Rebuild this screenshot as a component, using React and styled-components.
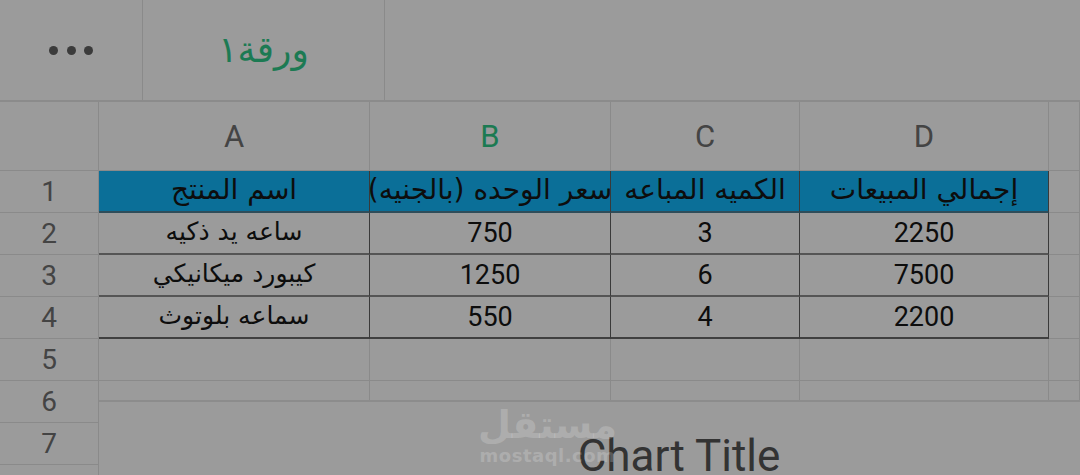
import React from "react";
import styled, { createGlobalStyle } from "styled-components";

const GlobalStyle = createGlobalStyle`
  html, body {
    margin: 0;
    padding: 0;
    background: #9b9b9b;
  }
  body {
    overflow: hidden;
  }
  *, *::before, *::after {
    box-sizing: border-box;
  }
`;

const ARABIC = `"DejaVu Sans", "Noto Sans", sans-serif`;
const LINE = "#8a8a8a";
const DARK = "#3a3a3a";

const Page = styled.div`
  position: relative;
  width: 1080px;
  height: 475px;
  overflow: hidden;
  background: #9b9b9b;
  font-family: Roboto, "Liberation Sans", sans-serif;
`;

/* ---------- sheet tabs bar ---------- */

const TopBar = styled.div`
  display: flex;
  height: 102px;
  border-bottom: 2px solid #8b8b8b;
`;

const MenuButton = styled.div`
  width: 143px;
  border-right: 1px solid ${LINE};
  display: flex;
  align-items: center;
  justify-content: center;
  gap: 8.5px;
`;

const Dot = styled.span`
  width: 9px;
  height: 9px;
  border-radius: 50%;
  background: #3b3b3b;
`;

const SheetTab = styled.div`
  width: 242px;
  border-right: 1px solid ${LINE};
  display: flex;
  align-items: center;
  justify-content: center;
  padding-bottom: 2px;
  color: #1c7a53;
  font-family: ${ARABIC};
  font-size: 36px;
`;

/* ---------- grid ---------- */

const Grid = styled.div`
  display: grid;
  grid-template-columns: 99px 271px 241px 189px 249px 1fr;
  grid-template-rows: 69px repeat(8, 42px);
`;

const Corner = styled.div`
  border-right: 1px solid ${LINE};
  border-bottom: 1px solid ${LINE};
`;

const ColHead = styled.div`
  display: flex;
  align-items: center;
  justify-content: center;
  border-right: 1px solid ${LINE};
  border-bottom: 1px solid ${LINE};
  font-size: 31px;
  font-weight: 400;
  color: ${(p) => (p.$active ? "#1b7a52" : "#444444")};
`;

const RowHead = styled.div`
  display: flex;
  align-items: center;
  justify-content: center;
  border-right: 1px solid ${LINE};
  border-bottom: 1px solid ${LINE};
  font-size: 28px;
  color: #444444;
`;

const Cell = styled.div`
  display: flex;
  align-items: center;
  justify-content: center;
  overflow: hidden;
  white-space: nowrap;
  border-right: 1px solid ${(p) => (p.$table ? DARK : LINE)};
  border-bottom: 2px solid ${(p) => (p.$last ? "#404040" : p.$head ? "#2f4d5a" : "#555555")};
  background: ${(p) => (p.$head ? "#0b6f98" : "transparent")};
  color: #0d0d0d;
  font-family: ${(p) => (p.$rtl ? ARABIC : `Roboto, "Liberation Sans", sans-serif`)};
  font-size: ${(p) => (p.$head ? "28px" : p.$rtl ? "25px" : "27px")};
  direction: ${(p) => (p.$rtl ? "rtl" : "ltr")};
  padding-bottom: ${(p) => (p.$rtl ? "4px" : "0")};
`;

const Text = styled.span`
  flex: none;
`;

const BlankCell = styled.div`
  border-right: 1px solid ${LINE};
  border-bottom: 1px solid ${LINE};
`;

/* ---------- chart object ---------- */

const ChartPanel = styled.div`
  position: absolute;
  top: 400px;
  left: 99px;
  width: 1160px;
  height: 200px;
  background: #9b9b9b;
  border-top: 2px solid #8c8c8c;
  display: flex;
  justify-content: center;
  padding-top: 32px;
`;

const ChartTitle = styled.div`
  font-family: Roboto, "Liberation Sans", sans-serif;
  font-size: 44px;
  line-height: 44px;
  color: #333333;
`;

const Watermark = styled.div`
  position: absolute;
  left: 478px;
  top: 404px;
  display: flex;
  flex-direction: column;
  align-items: center;
  color: rgba(255, 255, 255, 0.2);
  pointer-events: none;
`;

const WatermarkLogo = styled.span`
  font-family: ${ARABIC};
  font-weight: 700;
  font-size: 38px;
  line-height: 42px;
`;

const WatermarkSite = styled.span`
  font-family: "DejaVu Sans", sans-serif;
  font-weight: 700;
  font-size: 18px;
  line-height: 20px;
  letter-spacing: 0.5px;
`;

const columns = [
  { key: "A" },
  { key: "B", active: true },
  { key: "C" },
  { key: "D" },
];

const headers = ["اسم المنتج", "سعر الوحده (بالجنيه)", "الكميه المباعه", "إجمالي المبيعات"];

const rows = [
  ["ساعه يد ذكيه", "750", "3", "2250"],
  ["كيبورد ميكانيكي", "1250", "6", "7500"],
  ["سماعه بلوتوث", "550", "4", "2200"],
];

export default function App() {
  return (
    <Page>
      <GlobalStyle />
      <TopBar>
        <MenuButton>
          <Dot />
          <Dot />
          <Dot />
        </MenuButton>
        <SheetTab dir="rtl">ورقة١</SheetTab>
      </TopBar>

      <Grid>
        <Corner />
        {columns.map((c) => (
          <ColHead key={c.key} $active={c.active}>
            {c.key}
          </ColHead>
        ))}
        <ColHead />

        <RowHead>1</RowHead>
        {headers.map((h) => (
          <Cell key={h} $head $table $rtl>
            <Text>{h}</Text>
          </Cell>
        ))}
        <BlankCell />

        {rows.map((r, i) => (
          <React.Fragment key={r[0]}>
            <RowHead>{i + 2}</RowHead>
            {r.map((v, j) => (
              <Cell key={j} $table $last={i === rows.length - 1} $rtl={j === 0}>
                <Text>{v}</Text>
              </Cell>
            ))}
            <BlankCell />
          </React.Fragment>
        ))}

        {[5, 6, 7, 8].map((n) => (
          <React.Fragment key={n}>
            <RowHead>{n}</RowHead>
            <BlankCell />
            <BlankCell />
            <BlankCell />
            <BlankCell />
            <BlankCell />
          </React.Fragment>
        ))}
      </Grid>

      <ChartPanel>
        <ChartTitle>Chart Title</ChartTitle>
      </ChartPanel>

      <Watermark>
        <WatermarkLogo dir="rtl">مستقل</WatermarkLogo>
        <WatermarkSite>mostaql.com</WatermarkSite>
      </Watermark>
    </Page>
  );
}
